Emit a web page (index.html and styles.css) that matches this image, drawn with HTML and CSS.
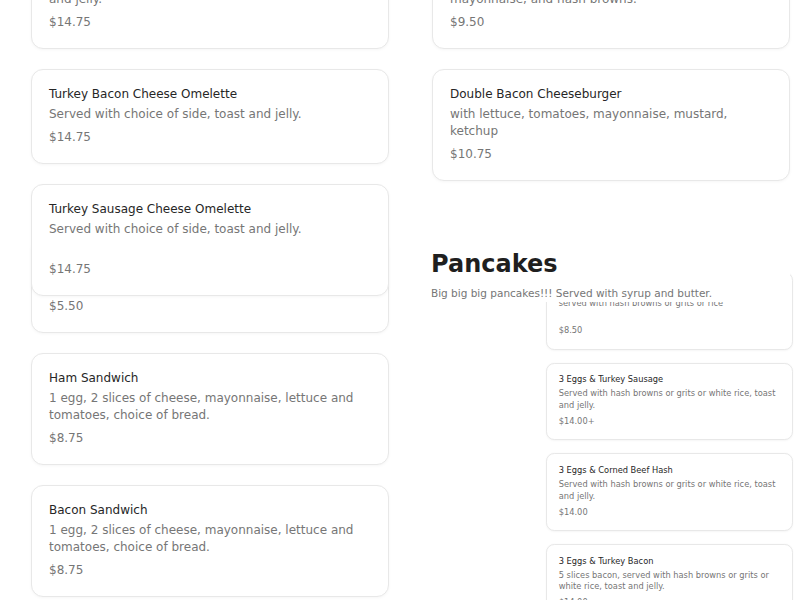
FILE: index.html
```html
<!DOCTYPE html>
<html lang="en">
<head>
<meta charset="utf-8">
<title>Menu</title>
<link rel="stylesheet" href="styles.css">
</head>
<body>
<main class="menu">
  <div class="col">
    <article class="card">
      <h3 class="card__title">Ham &amp; Cheese Omelette</h3>
      <p class="card__desc">Ham and cheese. Served with choice of side, toast and jelly.</p>
      <p class="card__price">$14.75</p>
    </article>
    <article class="card">
      <h3 class="card__title">Turkey Bacon Cheese Omelette</h3>
      <p class="card__desc">Served with choice of side, toast and jelly.</p>
      <p class="card__price">$14.75</p>
    </article>
    <article class="card card--tall card--raised">
      <h3 class="card__title">Turkey Sausage Cheese Omelette</h3>
      <p class="card__desc">Served with choice of side, toast and jelly.</p>
      <p class="card__price">$14.75</p>
    </article>
    <article class="card card--tucked">
      <h3 class="card__title">Egg &amp; Cheese Sandwich</h3>
      <p class="card__desc">1 egg, 2 slices of cheese, choice of bread.</p>
      <p class="card__price">$5.50</p>
    </article>
    <article class="card">
      <h3 class="card__title">Ham Sandwich</h3>
      <p class="card__desc">1 egg, 2 slices of cheese, mayonnaise, lettuce and tomatoes, choice of bread.</p>
      <p class="card__price">$8.75</p>
    </article>
    <article class="card">
      <h3 class="card__title">Bacon Sandwich</h3>
      <p class="card__desc">1 egg, 2 slices of cheese, mayonnaise, lettuce and tomatoes, choice of bread.</p>
      <p class="card__price">$8.75</p>
    </article>
  </div>

  <div class="col">
    <article class="card">
      <h3 class="card__title">Philly Cheesesteak</h3>
      <p class="card__desc">with cheese, lettuce, tomatoes, onions, pickles, mayonnaise, and hash browns.</p>
      <p class="card__price">$9.50</p>
    </article>
    <article class="card">
      <h3 class="card__title">Double Bacon Cheeseburger</h3>
      <p class="card__desc">with lettuce, tomatoes, mayonnaise, mustard, ketchup</p>
      <p class="card__price">$10.75</p>
    </article>

    <header class="section-head">
      <h2 class="section-head__title">Pancakes</h2>
      <p class="section-head__desc">Big big big pancakes!!! Served with syrup and butter.</p>
    </header>

    <div class="sub-list">
      <div class="sub-list__inner">
        <article class="card card--tall">
          <h3 class="card__title">2 Eggs &amp; Bacon</h3>
          <p class="card__desc">served with hash browns or grits or rice</p>
          <p class="card__price">$8.50</p>
        </article>
        <article class="card">
          <h3 class="card__title">3 Eggs &amp; Turkey Sausage</h3>
          <p class="card__desc">Served with hash browns or grits or white rice, toast and jelly.</p>
          <p class="card__price">$14.00+</p>
        </article>
        <article class="card">
          <h3 class="card__title">3 Eggs &amp; Corned Beef Hash</h3>
          <p class="card__desc">Served with hash browns or grits or white rice, toast and jelly.</p>
          <p class="card__price">$14.00</p>
        </article>
        <article class="card">
          <h3 class="card__title">3 Eggs &amp; Turkey Bacon</h3>
          <p class="card__desc">5 slices bacon, served with hash browns or grits or white rice, toast and jelly.</p>
          <p class="card__price">$14.00</p>
        </article>
      </div>
    </div>
  </div>
</main>
</body>
</html>
```

FILE: styles.css
```css
html, body {
  margin: 0;
  padding: 0;
  background: #ffffff;
}

body {
  font-family: "DejaVu Sans", "Liberation Sans", sans-serif;
  overflow: hidden;
}

.menu {
  display: grid;
  grid-template-columns: 358px 358px;
  column-gap: 43px;
  align-items: start;
  padding-left: 31px;
  margin-top: -63px;
}

.col {
  display: flex;
  flex-direction: column;
  gap: 20px;
}

.card {
  background: #ffffff;
  border: 1px solid #e8e8e8;
  border-radius: 12px;
  padding: 14px 17px 17px;
  box-shadow: 0 1px 3px rgba(0, 0, 0, 0.04);
}

.card__title {
  margin: 0;
  font-size: 12px;
  line-height: 20px;
  font-weight: 400;
  color: #262626;
}

.card__desc {
  margin: 2px 0 0;
  font-size: 12px;
  line-height: 17px;
  color: #767676;
}

.card__price {
  margin: 6px 0 0;
  font-size: 12px;
  line-height: 17px;
  color: #767676;
}

.card--tall .card__desc {
  padding-bottom: 17px;
}

.card--raised {
  position: relative;
  z-index: 1;
}

.card--tucked {
  margin-top: -78px;
}

.section-head {
  position: relative;
  z-index: 1;
  background: #ffffff;
  margin-left: -1px;
  padding-top: 48px;
  padding-bottom: 2px;
}

.section-head__title {
  margin: 0;
  font-size: 24px;
  line-height: 30px;
  font-weight: 700;
  color: #1f1f1f;
}

.section-head__desc {
  margin: 7px 0 0;
  font-size: 10.5px;
  line-height: 14px;
  color: #767676;
}

.sub-list {
  margin-top: -50px;
  padding-left: 114px;
}

.sub-list__inner {
  zoom: 0.69;
  width: 358px;
  display: flex;
  flex-direction: column;
  gap: 18.5px;
}
```
